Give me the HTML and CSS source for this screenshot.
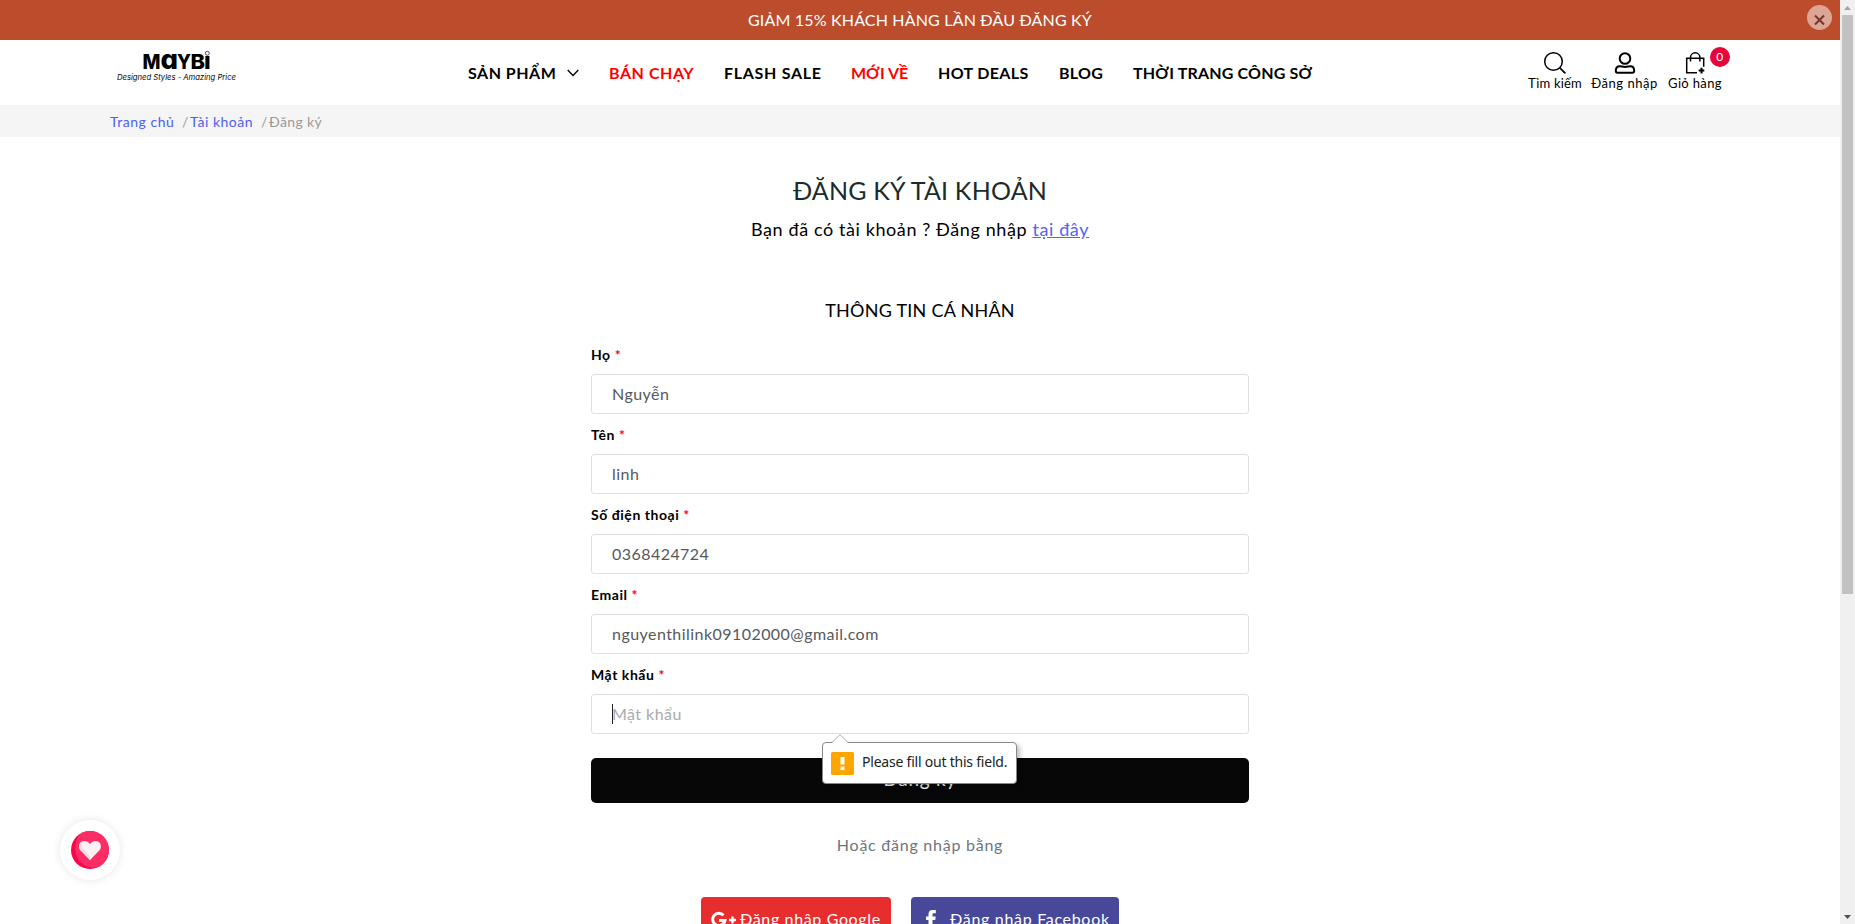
FILE: index.html
```html
<!DOCTYPE html>
<html lang="vi">
<head>
<meta charset="utf-8">
<title>Đăng ký tài khoản</title>
<link rel="stylesheet" href="styles.css">
</head>
<body>
<div class="screen">
<div class="page">
  <div class="promo"><span class="promo-text">GIẢM 15% KHÁCH HÀNG LẦN ĐẦU ĐĂNG KÝ</span>
    <span class="promo-close"><svg width="25" height="25" viewBox="0 0 25 25"><path d="M8 10.500l9 9M17 10.500l-9 9" stroke="#74382a" stroke-width="2" fill="none"/></svg></span>
  </div>
  <header class="header">
    <a class="logo"><svg width="124" height="36" viewBox="0 0 124 36">
      <text class="logo-name" x="27.500" y="19.700" textLength="18" lengthAdjust="spacingAndGlyphs">M</text>
      <text class="logo-name logo-a" x="45.500" y="19.500" textLength="17.500" lengthAdjust="spacingAndGlyphs">ɑ</text>
      <text class="logo-name" x="62" y="19.700" textLength="14" lengthAdjust="spacingAndGlyphs">Y</text>
      <text class="logo-name" x="75.600" y="19.700" textLength="14.500" lengthAdjust="spacingAndGlyphs">B</text>
      <text class="logo-name logo-i" x="89" y="19.700" textLength="6.700" lengthAdjust="spacingAndGlyphs">ı</text>
      <circle cx="92.300" cy="4.300" r="2" fill="#fff" stroke="#222" stroke-width=".8"/>
      <text class="logo-tag" x="2" y="31" textLength="119" lengthAdjust="spacingAndGlyphs">Designed Styles - Amazing Price</text>
    </svg></a>
    <nav class="nav">
      <a class="n1"><span>SẢN PHẨM</span><svg width="12" height="8" viewBox="0 0 12 8"><path d="M.7 1l5.300 5.500L11.300 1" fill="none" stroke="#000" stroke-width="1.300"/></svg></a>
      <a class="n2 hot">BÁN CHẠY</a>
      <a class="n3">FLASH SALE</a>
      <a class="n4 hot">MỚI VỀ</a>
      <a class="n5">HOT DEALS</a>
      <a class="n6">BLOG</a>
      <a class="n7">THỜI TRANG CÔNG SỞ</a>
    </nav>
    <div class="tools">
      <a class="t1"><svg width="22" height="22" viewBox="0 0 22 22" fill="none" stroke="#000"><circle cx="9.500" cy="9.500" r="8.800" stroke-width="1.500"/><path d="M15.800 15.800l5.600 5.600" stroke-width="1.700"/></svg><span>Tìm kiếm</span></a>
      <a class="t2"><svg width="22" height="22" viewBox="0 0 22 22" fill="none" stroke="#000" stroke-width="2"><circle cx="11" cy="6.500" r="5.300"/><path d="M5.500 14.200c2 0 3 .8 5.500.8s3.500-.8 5.500-.8c2.500 0 3.700 2 3.700 4.600 0 1.300-.5 2-1.700 2h-15c-1.200 0-1.700-.7-1.700-2 0-2.600 1.200-4.600 3.700-4.600z"/></svg><span>Đăng nhập</span></a>
      <a class="t3"><svg width="22" height="22" viewBox="0 0 22 22" fill="none" stroke="#000" stroke-width="1.500"><path d="M13 20.700H2.700V6.200h17v8.500M6.500 9.500V5.500a4.700 4.700 0 0 1 9.400 0v4"/><path d="M17.500 15.800v5.600M14.700 18.600h5.600" stroke-width="2"/></svg><span>Giỏ hàng</span><b class="badge">0</b></a>
    </div>
  </header>
  <div class="crumbs"><a class="c1">Trang chủ</a><i>/</i><a class="c2">Tài khoản</a><i>/</i><span class="c3">Đăng ký</span></div>
  <main class="main">
    <h1><span>ĐĂNG KÝ TÀI KHOẢN</span></h1>
    <p class="sub"><span>Bạn đã có tài khoản ? Đăng nhập <a>tại đây</a></span></p>
    <h2><span>THÔNG TIN CÁ NHÂN</span></h2>
    <form class="form">
      <label>Họ <em>*</em></label><div class="field f1">Nguyễn</div>
      <label>Tên <em>*</em></label><div class="field f2">linh</div>
      <label>Số điện thoại <em>*</em></label><div class="field f3">0368424724</div>
      <label>Email <em>*</em></label><div class="field f4">nguyenthilink09102000@gmail.com</div>
      <label>Mật khẩu <em>*</em></label><div class="field f5"><span class="caret"></span>Mật khẩu
        <div class="tip">
          <svg class="tip-arrow" width="16" height="9" viewBox="0 0 16 9"><path d="M0 8.500L8 .7l8 7.800V9H0z" fill="#fff"/><path d="M0 8.500L8 .7l8 7.800" fill="none" stroke="#aaa"/></svg>
          <svg width="23" height="23" viewBox="0 0 23 23"><rect width="23" height="23" rx="1.500" fill="#ffa500"/><path d="M9.500 5h4v7.500h-4zM9.500 14.500h4v3.500h-4z" fill="#fff"/></svg>
          <span>Please fill out this field.</span>
        </div>
      </div>
      <div class="submit">Đăng ký</div>
    </form>
    <p class="or"><span>Hoặc đăng nhập bằng</span></p>
    <div class="social">
      <a class="google"><svg width="26" height="18" viewBox="0 0 26 18" fill="none" stroke="#fff"><path d="M12.500 4.200A6.200 6.200 0 1 0 14 9.500H8" stroke-width="3"/><path d="M21.500 5.500v7M18 9h7" stroke-width="2.300"/></svg><span>Đăng nhập Google</span></a>
      <a class="facebook"><svg width="10" height="19" viewBox="0 0 10 19"><path d="M2.500 19v-9H0V6.500h2.500V4.300C2.500 1.500 4 0 6.700 0H9.800v3.300H8C6.900 3.300 6.500 3.800 6.500 4.700v1.800h3.200L9.200 10H6.500v9z" fill="#fff"/></svg><span>Đăng nhập Facebook</span></a>
    </div>
  </main>
  <div class="wish"><svg width="38" height="38" viewBox="0 0 38 38"><circle cx="19" cy="19" r="19" fill="#f9064c"/><path d="M19 0A19 19 0 0 1 28.500 35.400 18 18 0 0 1 4.500 16 17 17 0 0 1 11 1.800 19 19 0 0 1 19 0z" fill="#fc2c64"/><path d="M19 29L9.500 19.300c-2.300-2.500-1.700-6.700 1-8.500 2.700-1.700 6.500-1 8.500 2.200 2-3.200 5.800-3.900 8.500-2.200 2.700 1.800 3.300 6 1 8.500z" fill="#fff0f2"/><path d="M19 29L9.500 19.300c-2.300-2.500-1.700-6.700 1-8.500l.9-.4c-1.400 2.600-1 5.600.8 7.400l8.300 9.600z" fill="#dfe3e8"/></svg></div>
</div>
<div class="scroll"><svg width="15" height="15" viewBox="0 0 15 15"><path d="M4 10l3.500-4L11 10z" fill="#a3a3a3"/></svg><div class="thumb"></div><svg class="down" width="15" height="15" viewBox="0 0 15 15"><path d="M4 6l3.500 4L11 6z" fill="#505050"/></svg></div>
</div>
</body>
</html>
```
FILE: styles.css
```css
* { box-sizing: border-box; margin: 0; padding: 0; }
body { overflow: hidden; font-family: Lato, "Noto Sans", sans-serif; font-size: 16px; color: #000; background: #fff; }
svg { display: block; flex: none; overflow: visible; }
a, span, label { white-space: nowrap; }
.screen { display: flex; height: 924px; }
.page { position: relative; width: 1840px; height: 924px; overflow: hidden; }
.promo { position: relative; height: 40px; line-height: 40px; text-align: center; letter-spacing: .17px; background: #bb4c2c; color: #fff; }
.promo-close { position: absolute; right: 8px; top: 5px; width: 25px; height: 25px; border-radius: 50%; background: #dda595; }
.header { display: flex; height: 65px; }
.logo { width: 124px; margin-left: 115px; padding-top: 9px; }
.logo-name { font-family: Inter, sans-serif; font-weight: 800; font-size: 20.600px; }
.logo-a { font-size: 27px; }
.logo-i { font-size: 23px; }
.logo-tag { font-family: Inter, sans-serif; font-style: italic; font-weight: 400; font-size: 7.500px; }
.nav { display: flex; width: 845px; margin-left: 229px; gap: 30px; line-height: 66px; font-weight: 700; }
.n1 { display: flex; align-items: center; gap: 11px; width: 111px; letter-spacing: .5px; }
.n1 span { width: 88px; }
.n2 { width: 85px; letter-spacing: .55px; }
.n3 { width: 97px; letter-spacing: .7px; }
.n4 { width: 57px; }
.n5 { width: 91px; letter-spacing: .35px; }
.n6 { width: 44px; letter-spacing: .3px; }
.n7 { letter-spacing: .17px; }
.hot { color: #f00; }
.tools { display: flex; gap: 9px; margin-left: 215px; padding-top: 12px; font-size: 13px; line-height: 16px; }
.tools a { position: relative; display: flex; flex-direction: column; align-items: center; gap: 1px; }
.t1 { width: 54px; letter-spacing: .2px; }
.t2 { width: 67px; letter-spacing: .5px; }
.t3 { width: 56px; letter-spacing: .35px; }
.badge { position: absolute; left: 43px; top: -5px; width: 20px; height: 20px; border-radius: 50%; background: #e60539; color: #fff; font-weight: 400; font-size: 12px; line-height: 20px; text-align: center; }
.crumbs { display: flex; height: 32px; padding-left: 110px; background: #f5f5f5; font-size: 14px; line-height: 34px; color: #999; }
.crumbs a { color: #4c60f0; letter-spacing: .52px; }
.crumbs i { font-style: normal; margin-left: 8px; width: 8px; }
.c1 { width: 64px; }
.c2 { width: 63px; }
.c3 { letter-spacing: .35px; }
.main { text-align: center; }
h1 { padding-top: 37px; font-size: 25px; font-weight: 400; line-height: 32px; letter-spacing: .2px; color: #1c2b2b; }
.sub { padding-top: 10px; font-size: 18px; line-height: 26px; letter-spacing: .6px; }
.sub a { color: #5563f2; text-decoration: underline; }
h2 { padding-top: 55px; font-size: 18px; font-weight: 400; line-height: 26px; letter-spacing: .25px; }
.form { width: 658px; margin: 21px auto 0; text-align: left; }
label { display: block; height: 30px; font-size: 14px; font-weight: 700; line-height: 22px; letter-spacing: .55px; }
em { color: #f00; font-style: normal; }
.field { position: relative; height: 40px; margin-bottom: 10px; padding-left: 20px; border: 1px solid #dfdfdf; border-radius: 3px; line-height: 38px; letter-spacing: .45px; color: #55595c; }
.f5 { color: #aaa; }
.caret { position: absolute; left: 20px; top: 9px; width: 1px; height: 20px; background: #222; }
.tip { position: absolute; left: 230px; top: 47px; width: 195px; height: 42px; display: flex; align-items: center; gap: 8px; padding-left: 8px; border: 1px solid #888; border-radius: 4px; background: #fff; box-shadow: 3px 3px 5px rgba(0,0,0,.25); color: #222; font-family: "Noto Sans", sans-serif; font-size: 14px; line-height: 36px; letter-spacing: -.22px; }
.tip span { height: 38px; }
.tip-arrow { position: absolute; left: 9px; top: -9px; }
.submit { height: 45px; margin-top: 24px; border-radius: 5px; background: #070707; color: #fff; font-size: 19px; line-height: 41px; letter-spacing: .7px; text-align: center; }
.or { padding-top: 29px; line-height: 26px; letter-spacing: .75px; color: #6c757d; }
.social { display: flex; gap: 20px; margin-top: 39px; padding-left: 701px; line-height: 44px; color: #fff; }
.social a { display: flex; align-items: center; height: 45px; border-radius: 4px; }
.social span { height: 45px; }
.google { width: 190px; padding-left: 10px; gap: 3px; letter-spacing: .64px; background: #e82d2f; }
.facebook { width: 208px; padding-left: 15px; gap: 14px; letter-spacing: .69px; background: #48489b; }
.wish { position: absolute; left: 60px; top: 820px; width: 60px; height: 60px; padding: 11px; border-radius: 50%; background: #fff; box-shadow: 0 0 10px rgba(0,0,0,.1); }
.scroll { display: flex; flex-direction: column; width: 15px; height: 924px; background: #f0f0f0; }
.thumb { width: 11px; height: 579px; margin-left: 2px; background: #c1c1c1; }
.down { margin-top: auto; }
```
